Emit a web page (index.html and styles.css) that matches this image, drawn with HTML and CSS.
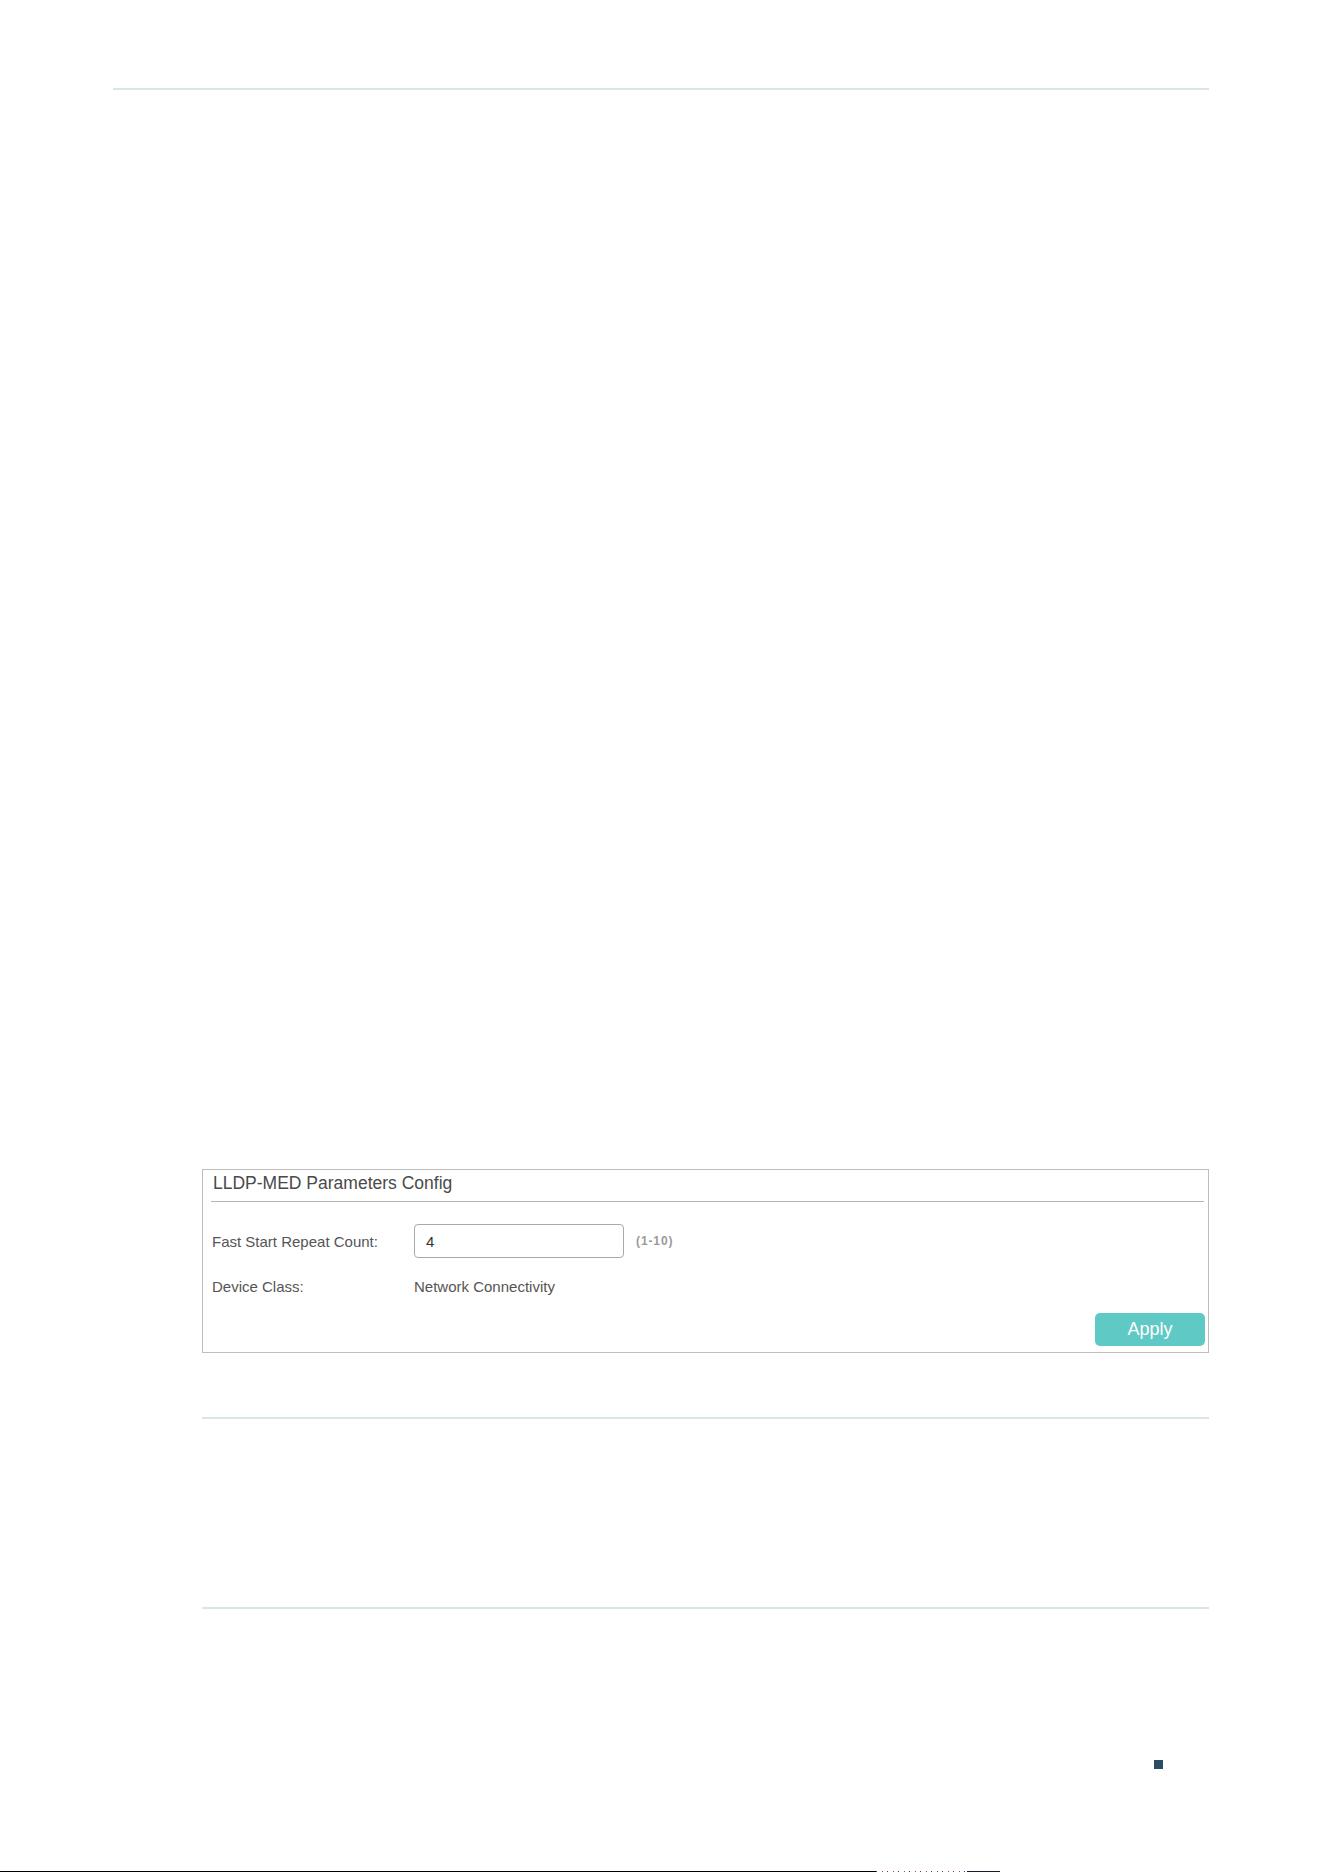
FILE: index.html
```html
<!DOCTYPE html>
<html lang="en">
<head>
<meta charset="utf-8">
<title>LLDP-MED Parameters Config</title>
<link rel="stylesheet" href="styles.css">
</head>
<body>
<div class="page">
  <div class="rule rule-top"></div>

  <section class="panel">
    <div class="panel-title">LLDP-MED Parameters Config</div>
    <div class="panel-body">
      <div class="row">
        <span class="label">Fast Start Repeat Count:</span>
        <input class="field" type="text" value="4">
        <span class="hint">(1-10)</span>
      </div>
      <div class="row">
        <span class="label">Device Class:</span>
        <span class="value">Network Connectivity</span>
      </div>
      <div class="actions">
        <button class="btn-apply" type="button">Apply</button>
      </div>
    </div>
  </section>

  <div class="rule rule-mid1"></div>
  <div class="rule rule-mid2"></div>

  <div class="marker"></div>

  <div class="bottom-strip">
    <span class="seg seg-main"></span>
    <span class="seg seg-dots"></span>
    <span class="seg seg-dark"></span>
  </div>
</div>
</body>
</html>
```

FILE: styles.css
```css
html, body {
  margin: 0;
  padding: 0;
  background: #ffffff;
}

body {
  font-family: "Liberation Sans", Arial, sans-serif;
  color: #555555;
}

.page {
  width: 1324px;
  height: 1872px;
  overflow: hidden;
  display: flex;
  flex-direction: column;
}

.rule {
  height: 2px;
  background: #d8e5e9;
  flex: none;
}

.rule-top {
  margin-top: 88px;
  margin-left: 113px;
  width: 1096px;
}

.panel {
  margin-top: 1079px;
  margin-left: 202px;
  width: 1007px;
  height: 184px;
  box-sizing: border-box;
  border: 1px solid #bdbdbd;
  display: flex;
  flex-direction: column;
  flex: none;
}

.panel-title {
  margin: 0 4px 0 8px;
  padding-left: 2px;
  height: 31px;
  line-height: 27px;
  border-bottom: 1px solid #b3b3b3;
  font-size: 17.5px;
  color: #4a4a4a;
}

.panel-body {
  padding: 22px 3px 0 9px;
  display: flex;
  flex-direction: column;
}

.row {
  display: flex;
  align-items: center;
  height: 34px;
  font-size: 15px;
}

.row + .row {
  margin-top: 11px;
}

.label {
  width: 202px;
  flex: none;
}

.field {
  width: 210px;
  height: 34px;
  box-sizing: border-box;
  border: 1px solid #a9a9a9;
  border-radius: 4px;
  padding: 0 0 0 11px;
  margin: 0;
  font-family: "Liberation Sans", Arial, sans-serif;
  font-size: 15px;
  color: #333333;
  outline: none;
}

.hint {
  margin-left: 12px;
  font-size: 12px;
  letter-spacing: 0.9px;
  color: #9a9a9a;
  font-weight: bold;
}

.value {
  color: #555555;
}

.actions {
  display: flex;
  justify-content: flex-end;
  margin-top: 10px;
}

.btn-apply {
  width: 110px;
  height: 33px;
  border: none;
  border-radius: 5px;
  background: #5fc9c5;
  color: #ffffff;
  font-family: "Liberation Sans", Arial, sans-serif;
  font-size: 18px;
  padding: 0;
  cursor: pointer;
}

.rule-mid1 {
  margin-top: 64px;
  margin-left: 202px;
  width: 1007px;
}

.rule-mid2 {
  margin-top: 188px;
  margin-left: 202px;
  width: 1007px;
}

.marker {
  margin-top: 151px;
  margin-left: 1154px;
  width: 9px;
  height: 9px;
  background: #2b4d63;
  flex: none;
}

.bottom-strip {
  margin-top: 102px;
  height: 1px;
  display: flex;
  flex: none;
}

.seg {
  height: 1px;
  display: block;
}

.seg-main {
  width: 876px;
  background: #000000;
}

.seg-dots {
  width: 91px;
  background: repeating-linear-gradient(90deg, #3a3a80 0 1px, #ffffff 1px 6px, #c04040 6px 7px, #ffffff 7px 11px);
}

.seg-dark {
  width: 33px;
  background: #1a1a2a;
}
```
